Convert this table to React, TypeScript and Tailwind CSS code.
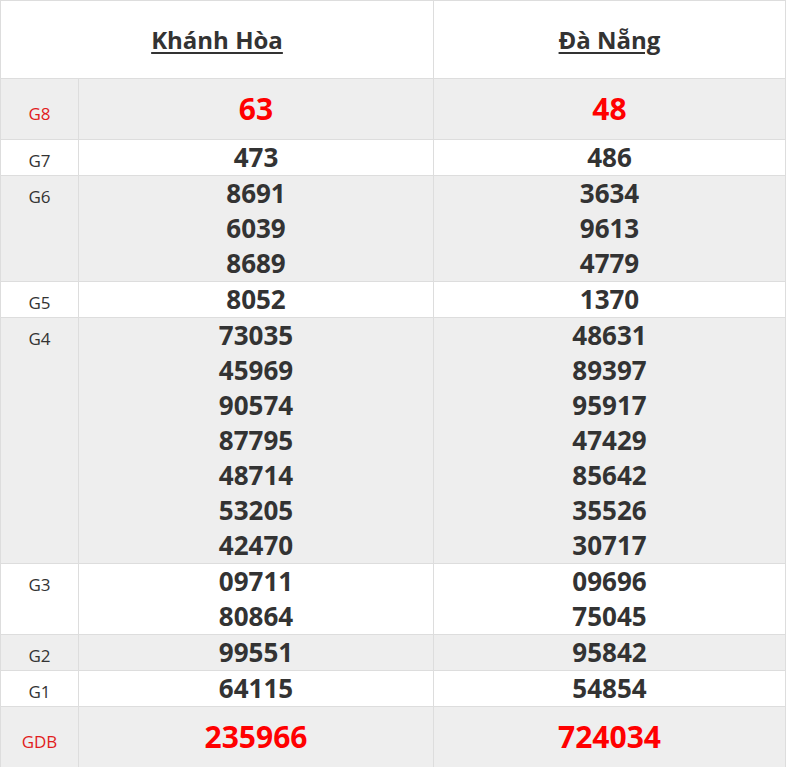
const rows = [
  { label: "G8", a: ["63"], b: ["48"], big: true, gray: true },
  { label: "G7", a: ["473"], b: ["486"] },
  { label: "G6", a: ["8691", "6039", "8689"], b: ["3634", "9613", "4779"], gray: true },
  { label: "G5", a: ["8052"], b: ["1370"] },
  {
    label: "G4",
    a: ["73035", "45969", "90574", "87795", "48714", "53205", "42470"],
    b: ["48631", "89397", "95917", "47429", "85642", "35526", "30717"],
    gray: true,
  },
  { label: "G3", a: ["09711", "80864"], b: ["09696", "75045"] },
  { label: "G2", a: ["99551"], b: ["95842"], gray: true },
  { label: "G1", a: ["64115"], b: ["54854"] },
  { label: "GDB", a: ["235966"], b: ["724034"], big: true, gray: true },
];

type Row = (typeof rows)[number];

const NumberCell = ({ nums, big }: { nums: string[]; big?: boolean }) => (
  <td className="border border-[#ddd] p-0 text-center align-baseline">
    {nums.map((n) => (
      <div
        key={n}
        className={
          big
            ? "text-[30px] leading-[60px] font-bold text-[#f00]"
            : "text-[26px] leading-[35px] font-bold text-[#333]"
        }
      >
        {n}
      </div>
    ))}
  </td>
);

const ResultRow = ({ row }: { row: Row }) => (
  <tr className={row.gray ? "bg-[#eee]" : "bg-white"}>
    <td
      className={`border border-[#ddd] p-0 text-center align-baseline text-[17px] leading-[20px] ${
        row.big ? "text-[#e11d1d]" : "text-[#333]"
      }`}
    >
      {row.label}
    </td>
    <NumberCell nums={row.a} big={row.big} />
    <NumberCell nums={row.b} big={row.big} />
  </tr>
);

export default function App() {
  return (
    <div
      className="w-[786px] bg-white"
      style={{ fontFamily: '"Open Sans", "Noto Sans", sans-serif' }}
    >
      <table className="w-full table-fixed border-collapse">
        <colgroup>
          <col className="w-[78px]" />
          <col className="w-[355px]" />
          <col />
        </colgroup>
        <thead>
          <tr className="h-[78px]">
            <th
              colSpan={2}
              className="border border-[#ddd] p-0 text-center align-middle text-[24px] font-bold text-[#333]"
            >
              <span className="underline underline-offset-[3px]">Khánh Hòa</span>
            </th>
            <th className="border border-[#ddd] p-0 text-center align-middle text-[24px] font-bold text-[#333]">
              <span className="underline underline-offset-[3px]">Đà Nẵng</span>
            </th>
          </tr>
        </thead>
        <tbody>
          {rows.map((r) => (
            <ResultRow key={r.label} row={r} />
          ))}
        </tbody>
      </table>
    </div>
  );
}
